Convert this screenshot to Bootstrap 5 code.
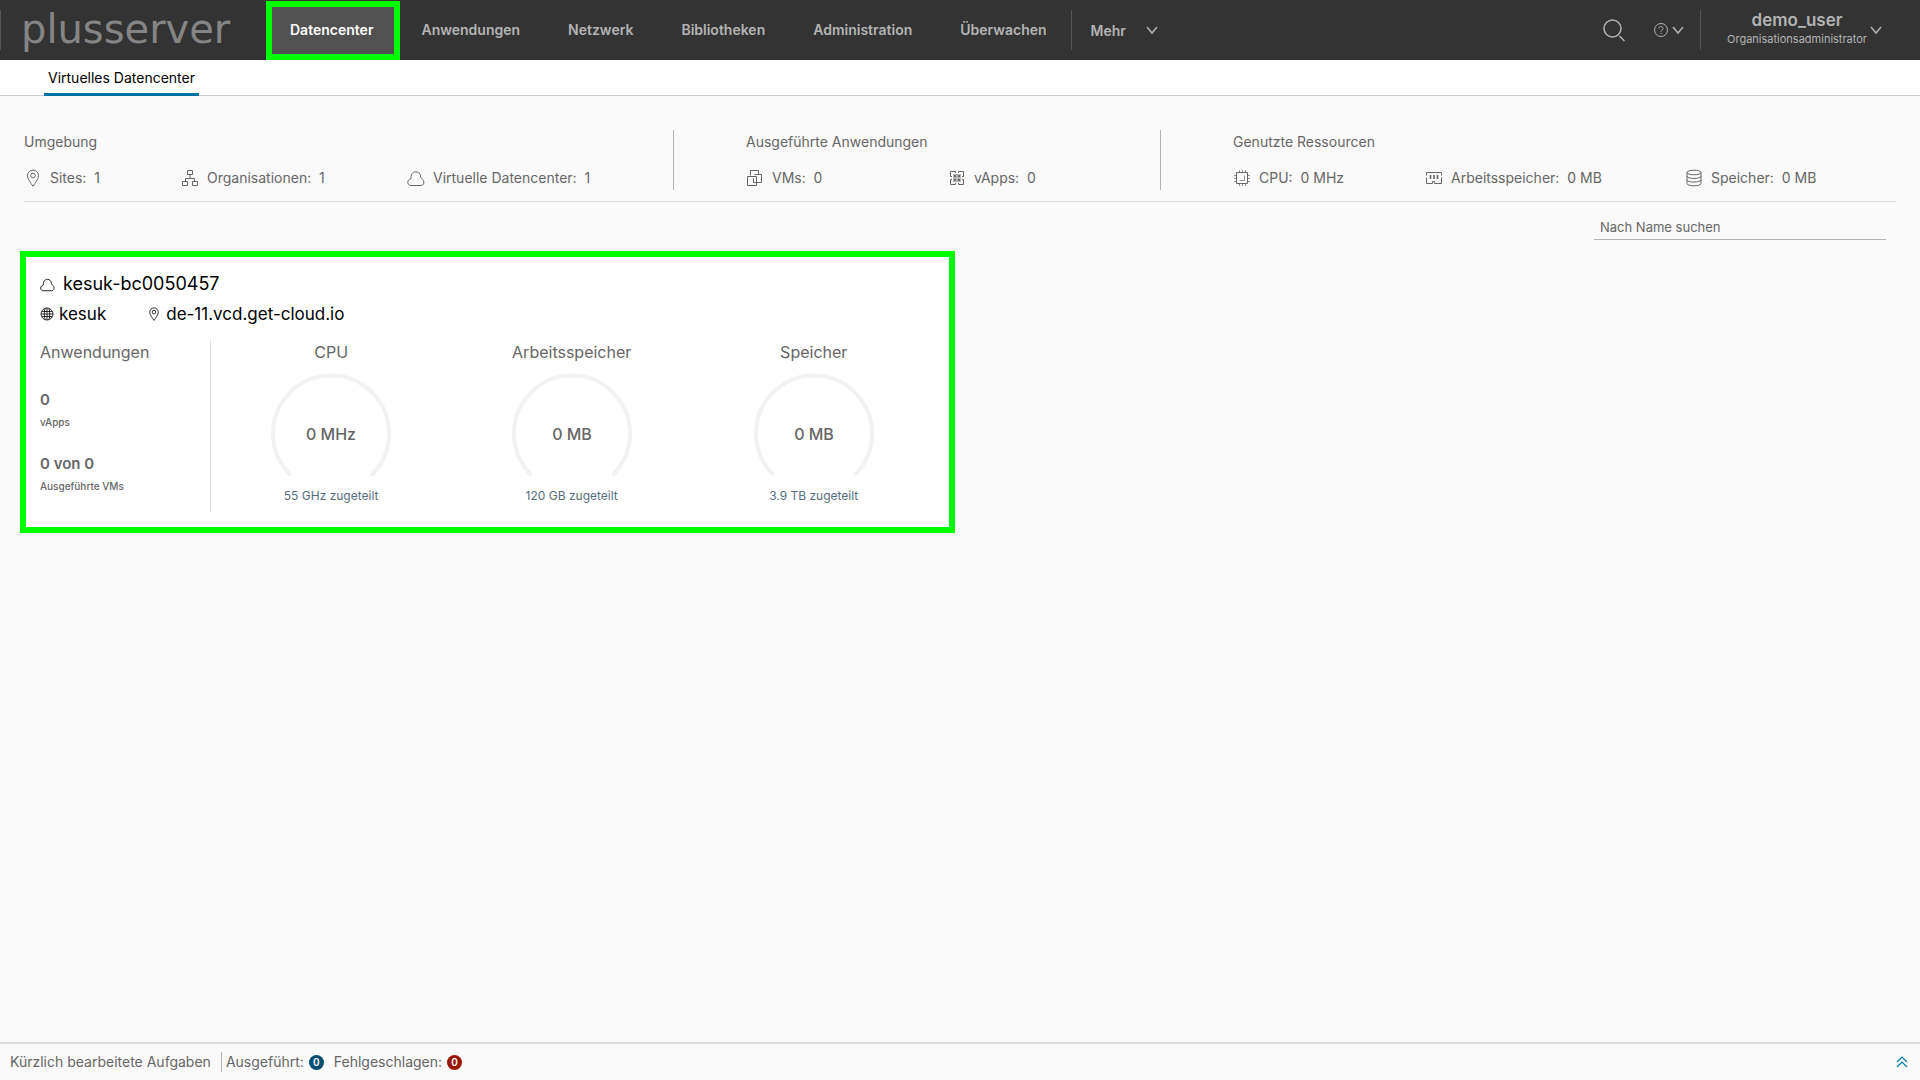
<!DOCTYPE html>
<html lang="de">
<head>
<meta charset="utf-8">
<meta name="viewport" content="width=device-width, initial-scale=1">
<title>Virtuelles Datencenter</title>
<link href="https://cdn.jsdelivr.net/npm/bootstrap@5.3.0/dist/css/bootstrap.min.css" rel="stylesheet">
<style>
  body { font-family: Inter, "Noto Sans", sans-serif; font-size: 14px; line-height: 20px; color: #666; background: #fafafa; }
  svg { display: block; flex: none; fill: none; stroke: currentColor; }
  .topbar { height: 60px; background: #333; color: #b3b3b3; }
  .topbar a, .topbar button { color: inherit; }
  .brand { width: 266px; padding-left: 20px; border-left: 1px solid #565656; height: 40px; font-family: "DejaVu Sans", sans-serif; font-weight: 400; font-size: 40px; line-height: 38px; }
  .topbar .brand { color: #858585; }
  .main-nav .nav-link { padding: 0 24px; line-height: 60px; font-size: 14px; font-weight: 600; }
  .topbar .main-nav .nav-link.active { margin: 1px -3px 0 0; height: 59px; padding: 0 21px 0 18px; line-height: 46px; border: 6px solid #0f0; background: #515151; color: #fff; }
  .more { border-left: 1px solid #565656; height: 40px; padding: 0 20px 0 19px; gap: 20px; font-size: 14px; font-weight: 600; }
  .search-button { margin-right: 28px; }
  .user { border-left: 1px solid #565656; height: 40px; padding: 0 38px 0 26px; gap: 3px; }
  .user-name { font-size: 17px; line-height: 18px; font-weight: 600; }
  .user-role { font-size: 11px; line-height: 20px; }
  .subnav { height: 36px; padding-left: 44px; border-bottom: 1px solid #ccc; }
  .subnav a { height: 36px; padding: 0 4px; line-height: 36px; color: #000; border-bottom: 3px solid #0072a3; }
  .summary { display: grid; grid-template-columns: 649fr 487fr 736fr; margin: 34px 24px 0; padding-bottom: 11px; border-bottom: 1px solid #ddd; }
  .summary section { height: 60px; padding-top: 2px; }
  .summary section + section { border-left: 1px solid #b3b3b3; padding-left: 72px; }
  .summary h2 { font-size: 14px; line-height: 20px; font-weight: 400; margin: 0 0 16px; }
  .facts { display: grid; }
  .facts-env { grid-template-columns: 157fr 226fr 266fr; }
  .facts-app { grid-template-columns: 202fr 212fr; }
  .facts-res { grid-template-columns: 192fr 260fr 211fr; }
  .fact { display: flex; align-items: center; gap: 8px; white-space: nowrap; }
  .search-box { width: 292px; height: 24px; margin: 14px 34px 0 0; padding: 0 6px 1px; border: 0; border-bottom: 1px solid #b3b3b3; background: transparent; font-size: 13px; color: #666; outline: 0; }
  .search-box::placeholder { color: #666; opacity: 1; }
  .vdc-grid { display: grid; grid-template-columns: 1fr 1fr; gap: 10px; padding: 11px 20px 0; }
  .vdc { background: #fff; border: 6px solid #0f0; padding: 12px 14px 15px; }
  .vdc-line { color: #000; font-size: 18px; line-height: 30px; }
  .vdc-origin { font-size: 17px; gap: 5px; }
  .vdc-tenant { margin-right: 36px; }
  .vdc-body { display: grid; grid-template-columns: 171fr 239fr 241fr 242fr; margin-top: 11px; }
  .vdc-body h3 { font-size: 16px; line-height: 24px; font-weight: 400; margin: 0; }
  .apps { border-right: 1px solid #ddd; height: 172px; }
  .apps strong { display: block; font-size: 15px; line-height: 24px; font-weight: 600; }
  .apps span { display: block; font-size: 10px; line-height: 20px; margin-bottom: 20px; font-weight: 500; }
  .meter-col { text-align: center; }
  .gauge text { font-size: 16px; font-weight: 500; fill: #666; stroke: none; }
  .alloc { font-size: 12px; line-height: 20px; color: #566d7e; }
  .tasks { height: 38px; padding: 0 10px; border-top: 2px solid #ddd; }
  .tasks-title { padding-right: 10px; border-right: 1px solid #b3b3b3; margin-right: 4px; }
  .tasks-toggle, .tasks-toggle:hover { color: #0079ad; }
  .dot { width: 15px; height: 15px; border-radius: 50%; color: #fff; font-size: 10px; line-height: 15px; text-align: center; font-weight: 600; }
  .dot-run { background: #004d73; margin: 0 10px 0 5px; }
  .dot-fail { background: #991700; margin-left: 5px; }
</style>
<script src="https://cdn.jsdelivr.net/npm/bootstrap@5.3.0/dist/js/bootstrap.bundle.min.js"></script>
</head>
<body class="d-flex flex-column min-vh-100">
<svg width="0" height="0" class="position-absolute" aria-hidden="true">
  <defs>
    <symbol id="cloud" viewBox="0 0 18 18"><path d="M4 16.500C1.800 16.500 .8 14.800 .8 13.200C.8 11.400 2.100 10.200 3.800 10C3.800 5.500 5.700 2.800 8.800 2.800C11.800 2.800 13.600 5 13.700 8C13.800 9.300 15.600 10 16.500 11.600C17.600 13.800 16.300 16.500 14 16.500Z"/></symbol>
    <symbol id="pin" viewBox="0 0 18 18"><path d="M9 17.300C6.500 13.500 3.500 10 3.500 6.600A5.500 5.500 0 0 1 14.500 6.600C14.500 10 11.500 13.500 9 17.300Z"/><circle cx="9" cy="6.500" r="2.300"/></symbol>
    <symbol id="chevron" viewBox="0 0 12 12"><path d="M1 3L6 9L11 3"/></symbol>
  </defs>
</svg>

<header class="topbar d-flex align-items-center">
  <a href="#" class="brand text-decoration-none">plusserver</a>
  <nav class="main-nav nav flex-nowrap align-self-start">
    <a class="nav-link active" aria-current="page" href="#">Datencenter</a>
    <a class="nav-link" href="#">Anwendungen</a>
    <a class="nav-link" href="#">Netzwerk</a>
    <a class="nav-link" href="#">Bibliotheken</a>
    <a class="nav-link" href="#">Administration</a>
    <a class="nav-link" href="#">Überwachen</a>
  </nav>
  <button type="button" class="more btn rounded-0 border-top-0 border-end-0 border-bottom-0 d-flex align-items-center">Mehr
    <svg width="12" height="12" stroke-width="1.500"><use href="#chevron"/></svg></button>
  <div class="ms-auto d-flex align-items-center">
    <button type="button" class="search-button btn p-0 border-0" aria-label="Suchen">
      <svg width="24" height="24" viewBox="0 0 24 24" stroke-width="1.500"><circle cx="10.500" cy="10.500" r="8.500"/><path d="M17.500 18L22.500 23"/></svg></button>
    <button type="button" class="btn p-0 border-0 me-3 d-flex align-items-center gap-1" aria-label="Hilfe">
      <svg width="14" height="14" viewBox="0 0 14 14"><circle cx="7" cy="7" r="6.500"/><path d="M5 5.500C5 4 6 3.500 7 3.500S9 4.200 9 5.400C9 7 7 6.800 7 8.600M7 9.800V11"/></svg>
      <svg width="12" height="12" stroke-width="1.500"><use href="#chevron"/></svg></button>
    <button type="button" class="user btn rounded-0 border-top-0 border-end-0 border-bottom-0 d-flex align-items-center">
      <span class="d-block"><span class="user-name d-block">demo_user</span><span class="user-role d-block">Organisationsadministrator</span></span>
      <svg width="12" height="12" stroke-width="1.500"><use href="#chevron"/></svg></button>
  </div>
</header>

<nav class="subnav bg-white d-flex"><a href="#" class="text-decoration-none">Virtuelles Datencenter</a></nav>

<main class="flex-grow-1">
  <div class="summary">
    <section>
      <h2>Umgebung</h2>
      <div class="facts facts-env">
        <div class="fact"><svg width="18" height="18"><use href="#pin"/></svg><span>Sites:&nbsp; 1</span></div>
        <div class="fact"><svg width="18" height="18" viewBox="0 0 18 18"><path d="M6.500 1.500H11.500V5.500H6.500ZM1.500 12.500H6.500V16.500H1.500ZM11.500 12.500H16.500V16.500H11.500ZM9 5.500V9.500M4.500 12V9.500H13.500V12"/></svg><span>Organisationen:&nbsp; 1</span></div>
        <div class="fact"><svg width="18" height="18"><use href="#cloud"/></svg><span>Virtuelle Datencenter:&nbsp; 1</span></div>
      </div>
    </section>
    <section>
      <h2>Ausgeführte Anwendungen</h2>
      <div class="facts facts-app">
        <div class="fact"><svg width="18" height="18" viewBox="0 0 18 18"><path d="M4.500 6.500V1.500H12.500V5M8.500 5.500H15.500V13.500H7.500V9.500M1.500 7.500H10.500V16.500H1.500Z"/></svg><span>VMs:&nbsp; 0</span></div>
        <div class="fact"><svg width="18" height="18" viewBox="0 0 18 18"><path d="M2.500 7.500V2.500H7.500V4M10.500 4V2.500H15.500V7.500H14M14 10.500H15.500V15.500H10.500V14M7.500 14V15.500H2.500V10.500H4M2.500 7.500H4"/><path d="M5 5H13V13H5Z" fill="currentColor" fill-opacity=".45" stroke="none"/><path d="M6 7H8M10 7H12M6 11H8M10 11H12" stroke-width="2"/></svg><span>vApps:&nbsp; 0</span></div>
      </div>
    </section>
    <section>
      <h2>Genutzte Ressourcen</h2>
      <div class="facts facts-res">
        <div class="fact"><svg width="18" height="18" viewBox="0 0 18 18"><path d="M3.500 3.500H14.500V14.500H3.500Z"/><path d="M11.500 6.500V11.500H6.500M6.500 1V3M9.500 1V3M12.500 1V3M6.500 15V17M9.500 15V17M12.500 15V17M1 6.500H3M1 9.500H3M1 12.500H3M15 6.500H17M15 9.500H17M15 12.500H17" stroke-opacity=".7"/></svg><span>CPU:&nbsp; 0 MHz</span></div>
        <div class="fact"><svg width="18" height="18" viewBox="0 0 18 18"><path d="M1.500 6.500V3.500H16.500V6.500M1.500 8.500V14.500H7.500V12.500H9.500V14.500H16.500V8.500"/><path d="M5.500 6V10M9 6V10M12.500 6V10" stroke-width="1.600"/></svg><span>Arbeitsspeicher:&nbsp; 0 MB</span></div>
        <div class="fact"><svg width="18" height="18" viewBox="0 0 18 18"><ellipse cx="9" cy="3.500" rx="7" ry="2.300"/><path d="M2 3.500V14.500C2 17.600 16 17.600 16 14.500V3.500M2 7.200C2 10.200 16 10.200 16 7.200M2 10.800C2 13.800 16 13.800 16 10.800"/></svg><span>Speicher:&nbsp; 0 MB</span></div>
      </div>
    </section>
  </div>

  <div class="d-flex justify-content-end">
    <input type="search" class="search-box" placeholder="Nach Name suchen" aria-label="Nach Name suchen">
  </div>

  <div class="vdc-grid">
    <article class="vdc">
      <div class="vdc-line d-flex align-items-center gap-2"><svg width="15" height="15"><use href="#cloud"/></svg>kesuk-bc0050457</div>
      <div class="vdc-line vdc-origin d-flex align-items-center">
        <svg width="14" height="14" viewBox="0 0 14 14" stroke-width=".8"><circle cx="7" cy="7" r="6"/><path d="M5 1.500C4 5 4 9 5 12.500M9 1.500C10 5 10 9 9 12.500M7 1V13M1 7H13M2 4.500H12M2 9.500H12"/></svg><span class="vdc-tenant">kesuk</span>
        <svg width="14" height="14"><use href="#pin"/></svg><span>de-11.vcd.get-cloud.io</span>
      </div>
      <div class="vdc-body">
        <div class="apps">
          <h3 class="mb-4">Anwendungen</h3>
          <strong>0</strong><span>vApps</span>
          <strong>0 von 0</strong><span>Ausgeführte VMs</span>
        </div>
        <div class="meter-col">
          <h3>CPU</h3>
          <svg class="gauge mx-auto" width="124" height="122" viewBox="0 0 124 122"><path d="M20.500 110A58 58 0 1 1 103.500 110" stroke="#f2f2f2" stroke-width="4" stroke-linecap="round"/><text x="62" y="76" text-anchor="middle">0 MHz</text></svg>
          <div class="alloc">55 GHz zugeteilt</div>
        </div>
        <div class="meter-col">
          <h3>Arbeitsspeicher</h3>
          <svg class="gauge mx-auto" width="124" height="122" viewBox="0 0 124 122"><path d="M20.500 110A58 58 0 1 1 103.500 110" stroke="#f2f2f2" stroke-width="4" stroke-linecap="round"/><text x="62" y="76" text-anchor="middle">0 MB</text></svg>
          <div class="alloc">120 GB zugeteilt</div>
        </div>
        <div class="meter-col">
          <h3>Speicher</h3>
          <svg class="gauge mx-auto" width="124" height="122" viewBox="0 0 124 122"><path d="M20.500 110A58 58 0 1 1 103.500 110" stroke="#f2f2f2" stroke-width="4" stroke-linecap="round"/><text x="62" y="76" text-anchor="middle">0 MB</text></svg>
          <div class="alloc">3.9 TB zugeteilt</div>
        </div>
      </div>
    </article>
  </div>
</main>

<footer class="tasks d-flex align-items-center">
  <span class="tasks-title">Kürzlich bearbeitete Aufgaben</span>
  <span>Ausgeführt:</span><span class="dot dot-run">0</span>
  <span>Fehlgeschlagen:</span><span class="dot dot-fail">0</span>
  <button type="button" class="tasks-toggle btn p-0 border-0 ms-auto" aria-label="Aufgaben einblenden">
    <svg width="16" height="14" viewBox="0 0 16 14" stroke-width="1.200"><path d="M3 7L8 2L13 7M3 12L8 7L13 12"/></svg></button>
</footer>
</body>
</html>
